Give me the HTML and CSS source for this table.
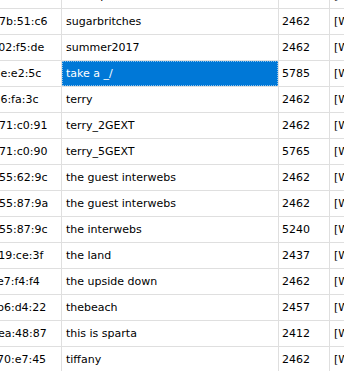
FILE: index.html
```html
<!DOCTYPE html>
<html lang="en">
<head>
<meta charset="utf-8">
<title>Networks</title>
<link rel="stylesheet" href="styles.css">
</head>
<body>
<div class="viewport">
  <div class="table">
    <div class="cell mac">f4:f2:6d:12:ab:80</div><div class="cell ssid">steampunk</div><div class="cell freq">2462</div><div class="cell caps">[WPA2-PSK-CCMP][ESS]</div>
    <div class="cell mac">10:13:31:7b:51:c6</div><div class="cell ssid">sugarbritches</div><div class="cell freq">2462</div><div class="cell caps">[WPA2-PSK-CCMP][ESS]</div>
    <div class="cell mac">5c:33:12:02:f5:de</div><div class="cell ssid">summer2017</div><div class="cell freq">2462</div><div class="cell caps">[WPA2-PSK-CCMP][ESS]</div>
    <div class="cell mac">cc:cc:cc:de:e2:5c</div><div class="cell ssid sel"><div class="focus">take a _/</div></div><div class="cell freq">5785</div><div class="cell caps">[WPA2-PSK-CCMP][ESS]</div>
    <div class="cell mac">cc:cc:cc:d6:fa:3c</div><div class="cell ssid">terry</div><div class="cell freq">2462</div><div class="cell caps">[WPA2-PSK-CCMP][ESS]</div>
    <div class="cell mac">20:47:12:71:c0:91</div><div class="cell ssid">terry_2GEXT</div><div class="cell freq">2462</div><div class="cell caps">[WPA2-PSK-CCMP][ESS]</div>
    <div class="cell mac">20:47:12:71:c0:90</div><div class="cell ssid">terry_5GEXT</div><div class="cell freq">5765</div><div class="cell caps">[WPA2-PSK-CCMP][ESS]</div>
    <div class="cell mac">30:90:41:55:62:9c</div><div class="cell ssid">the guest interwebs</div><div class="cell freq">2462</div><div class="cell caps">[WPA2-PSK-CCMP][ESS]</div>
    <div class="cell mac">30:90:41:55:87:9a</div><div class="cell ssid">the guest interwebs</div><div class="cell freq">2462</div><div class="cell caps">[WPA2-PSK-CCMP][ESS]</div>
    <div class="cell mac">30:90:41:55:87:9c</div><div class="cell ssid">the interwebs</div><div class="cell freq">5240</div><div class="cell caps">[WPA2-PSK-CCMP][ESS]</div>
    <div class="cell mac">1c:23:45:19:ce:3f</div><div class="cell ssid">the land</div><div class="cell freq">2437</div><div class="cell caps">[WPA2-PSK-CCMP][ESS]</div>
    <div class="cell mac">0c:c4:7a:e7:f4:f4</div><div class="cell ssid">the upside down</div><div class="cell freq">2462</div><div class="cell caps">[WPA2-PSK-CCMP][ESS]</div>
    <div class="cell mac">a0:c1:c2:b6:d4:22</div><div class="cell ssid">thebeach</div><div class="cell freq">2457</div><div class="cell caps">[WPA2-PSK-CCMP][ESS]</div>
    <div class="cell mac">d8:c4:6a:ea:48:87</div><div class="cell ssid">this is sparta</div><div class="cell freq">2412</div><div class="cell caps">[WPA2-PSK-CCMP][ESS]</div>
    <div class="cell mac">a4:c1:c2:70:e7:45</div><div class="cell ssid">tiffany</div><div class="cell freq">2462</div><div class="cell caps">[WPA2-PSK-CCMP][ESS]</div>
  </div>
</div>
</body>
</html>
```
FILE: styles.css
```css
html, body {
  margin: 0;
  padding: 0;
  background: #ffffff;
  overflow: hidden;
}

.viewport {
  width: 344px;
  height: 371px;
  overflow: hidden;
}

.table {
  display: grid;
  grid-template-columns: 120px 217px 51px 220px;
  grid-auto-rows: 26px;
  margin-left: -58px;
  margin-top: -17px;
  font-family: "DejaVu Sans", Verdana, sans-serif;
  font-size: 11px;
  color: #000000;
}

.cell {
  box-sizing: border-box;
  border-right: 1px solid #dfdfdf;
  border-bottom: 1px solid #dfdfdf;
  line-height: 25px;
  white-space: nowrap;
  overflow: hidden;
  padding-left: 4px;
}

.freq {
  padding-left: 3px;
}

.caps {
  border-right: none;
}

.sel {
  padding: 0;
  background: #0078d7;
  color: #ffffff;
}

.focus {
  box-sizing: border-box;
  height: 100%;
  border: 1px dotted rgba(255, 255, 255, 0.55);
  padding-left: 3px;
  line-height: 23px;
}
```
